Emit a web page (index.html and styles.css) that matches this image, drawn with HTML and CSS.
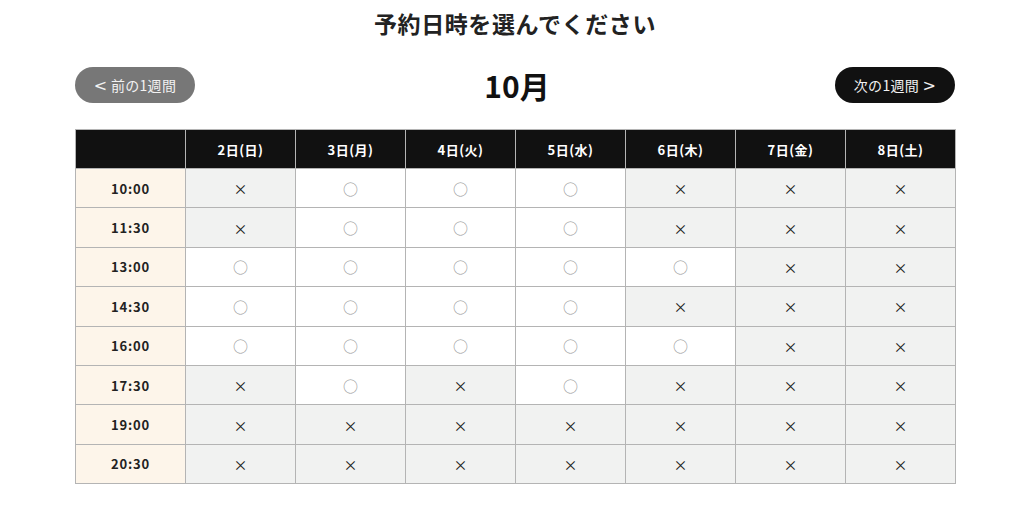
FILE: index.html
```html
<!DOCTYPE html>
<html lang="ja">
<head>
<meta charset="utf-8">
<link rel="stylesheet" href="styles.css">
</head>
<body>
<div class="wrap">
  <h1 class="title">予約日時を選んでください</h1>
  <div class="nav">
    <button class="btn btn-prev"><span class="chev">&lt;</span> 前の1週間</button>
    <div class="month">10月</div>
    <button class="btn btn-next">次の1週間 <span class="chev">&gt;</span></button>
  </div>
  <table class="cal">
    <thead>
      <tr><th></th><th>2日(日)</th><th>3日(月)</th><th>4日(火)</th><th>5日(水)</th><th>6日(木)</th><th>7日(金)</th><th>8日(土)</th></tr>
    </thead>
    <tbody>
      <tr><td class="time">10:00</td><td class="ng">×</td><td class="ok">○</td><td class="ok">○</td><td class="ok">○</td><td class="ng">×</td><td class="ng">×</td><td class="ng">×</td></tr>
      <tr><td class="time">11:30</td><td class="ng">×</td><td class="ok">○</td><td class="ok">○</td><td class="ok">○</td><td class="ng">×</td><td class="ng">×</td><td class="ng">×</td></tr>
      <tr><td class="time">13:00</td><td class="ok">○</td><td class="ok">○</td><td class="ok">○</td><td class="ok">○</td><td class="ok">○</td><td class="ng">×</td><td class="ng">×</td></tr>
      <tr><td class="time">14:30</td><td class="ok">○</td><td class="ok">○</td><td class="ok">○</td><td class="ok">○</td><td class="ng">×</td><td class="ng">×</td><td class="ng">×</td></tr>
      <tr><td class="time">16:00</td><td class="ok">○</td><td class="ok">○</td><td class="ok">○</td><td class="ok">○</td><td class="ok">○</td><td class="ng">×</td><td class="ng">×</td></tr>
      <tr><td class="time">17:30</td><td class="ng">×</td><td class="ok">○</td><td class="ng">×</td><td class="ok">○</td><td class="ng">×</td><td class="ng">×</td><td class="ng">×</td></tr>
      <tr><td class="time">19:00</td><td class="ng">×</td><td class="ng">×</td><td class="ng">×</td><td class="ng">×</td><td class="ng">×</td><td class="ng">×</td><td class="ng">×</td></tr>
      <tr><td class="time">20:30</td><td class="ng">×</td><td class="ng">×</td><td class="ng">×</td><td class="ng">×</td><td class="ng">×</td><td class="ng">×</td><td class="ng">×</td></tr>
    </tbody>
  </table>
</div>
</body>
</html>
```

FILE: styles.css
```css
* { box-sizing: border-box; }
html, body { margin: 0; padding: 0; background: #fff; }
body {
  font-family: "Noto Sans CJK JP", "Noto Sans", sans-serif;
  color: #222;
}
.wrap {
  width: 880px;
  margin-left: 75px;
  padding-top: 6px;
}
.title {
  margin: 0;
  text-align: center;
  font-size: 23px;
  font-weight: 700;
  line-height: 34px;
  letter-spacing: 0.6px;
  color: #222;
}
.nav {
  display: flex;
  align-items: center;
  justify-content: space-between;
  margin-top: 27px;
  height: 36px;
}
.btn {
  width: 120px;
  height: 36px;
  border: none;
  border-radius: 18px;
  color: #f2f2f2;
  font-family: "Noto Sans CJK JP", sans-serif;
  font-size: 14px;
  letter-spacing: 0.3px;
  padding: 0;
  line-height: 36px;
}
.chev {
  font-family: "DejaVu Sans", sans-serif;
  font-size: 16px;
}
.btn-prev { background: #777; }
.btn-next { background: #111; }
.month {
  font-size: 30px;
  font-weight: 700;
  line-height: 36px;
  color: #111;
  margin-left: 4px;
}
.cal {
  margin-top: 26px;
  width: 880px;
  border-collapse: collapse;
  table-layout: fixed;
  border: 1px solid #b4b4b4;
}
.cal th, .cal td {
  width: 110px;
  border: 1px solid #b4b4b4;
  text-align: center;
  padding: 0;
}
.cal th {
  background: #111;
  color: #fff;
  font-size: 13px;
  font-weight: 700;
  letter-spacing: 0.5px;
  height: 39px;
}
.cal td {
  height: 39.4px;
  font-size: 13px;
}
.cal td.time {
  background: #fdf5ea;
  font-weight: 700;
  color: #222;
  letter-spacing: 0.8px;
}
.cal td.ng {
  background: #f1f2f1;
  color: #222;
  font-size: 14px;
}
.cal td.ok {
  background: #fff;
  color: #999;
  font-size: 15px;
}
```
